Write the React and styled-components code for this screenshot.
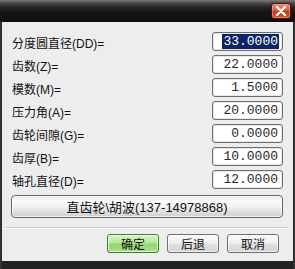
import React from 'react';
import styled, { createGlobalStyle } from 'styled-components';

const GlobalStyle = createGlobalStyle`
    html, body {
        margin: 0;
        padding: 0;
        background: #1b1b1b;
    }
    * {
        box-sizing: border-box;
    }
`;

const Window = styled.div`
    width: 295px;
    height: 269px;
    display: flex;
    flex-direction: column;
    background: #1c1c1c;
    font-family: "Liberation Sans", "Noto Sans CJK SC", sans-serif;
`;

const TitleBar = styled.div`
    height: 22px;
    flex: none;
    display: flex;
    justify-content: flex-end;
    align-items: flex-start;
    padding: 3px 4px 0 0;
    background: linear-gradient(to bottom, #7a7a7a 0px, #4a4a4a 3px, #262626 7px, #151515 12px, #0e0e0e 22px);
`;

const CloseButton = styled.div`
    width: 20px;
    height: 16px;
    border-radius: 3px;
    border: 1px solid #4a1208;
    background: linear-gradient(to bottom, #eb8c72 0%, #d85a3c 45%, #c0381c 55%, #d0563a 100%);
    display: flex;
    align-items: center;
    justify-content: center;
    box-shadow: inset 0 0 0 1px rgba(255, 190, 170, 0.45);
`;

const Frame = styled.div`
    flex: 1;
    display: flex;
    padding: 0 2px 8px 2px;
    background: linear-gradient(to right, #3c3c3c, #222 2px, #222 calc(100% - 2px), #3c3c3c);
`;

const Body = styled.div`
    flex: 1;
    background: #ededed;
    padding: 10px 10px 0 9px;
    display: flex;
    flex-direction: column;
`;

const Rows = styled.div`
    display: flex;
    flex-direction: column;
    gap: 4px;
`;

const Row = styled.div`
    height: 19px;
    display: flex;
    align-items: center;
    justify-content: space-between;
`;

const Label = styled.span`
    font-size: 12px;
    color: #111;
    padding-left: 1px;
    padding-top: 2px;
`;

const Field = styled.div`
    width: 71px;
    height: 19px;
    border: 1px solid #6e6e6e;
    border-radius: 3px;
    background: #fff;
    box-shadow: inset 0 0 0 1px #e6e6e6;
    display: flex;
    align-items: center;
    justify-content: flex-end;
    padding: 0 3px;
    font-family: "Liberation Mono", "DejaVu Sans Mono", monospace;
    font-size: 13px;
    color: #2a2a2a;
`;

const Value = styled.span`
    line-height: 15px;
    padding: 0 1px;
    background: ${p => (p.$selected ? '#0c2468' : 'transparent')};
    color: ${p => (p.$selected ? '#ffffff' : '#2a2a2a')};
`;

const WideButton = styled.div`
    margin-top: 6px;
    height: 23px;
    border: 1px solid #666;
    border-radius: 4px;
    background: linear-gradient(to bottom, #e9e9e9 0%, #fbfbfb 25%, #f2f2f2 50%, #dcdcdc 80%, #cfcfcf 100%);
    box-shadow: inset 0 0 0 1px rgba(255, 255, 255, 0.7);
    display: flex;
    align-items: center;
    justify-content: center;
    font-size: 13px;
    color: #111;
`;

const Separator = styled.div`
    margin: 9px -5px 0 -5px;
    height: 2px;
    border-top: 1px solid #c9c9c9;
    border-bottom: 1px solid #fbfbfb;
`;

const ButtonRow = styled.div`
    margin-top: 5px;
    display: flex;
    justify-content: flex-end;
    gap: 8px;
    padding-right: 4px;
`;

const Button = styled.div`
    width: 52px;
    height: 19px;
    border-radius: 3px;
    border: 1px solid ${p => (p.$primary ? '#3f7f2c' : '#707070')};
    background: ${p =>
        p.$primary
            ? 'linear-gradient(to bottom, #d9f4c8 0%, #b6e79a 45%, #92d76c 55%, #a9e28a 100%)'
            : 'linear-gradient(to bottom, #fafafa 0%, #f0f0f0 45%, #e0e0e0 55%, #d4d4d4 100%)'};
    box-shadow: inset 0 0 0 1px rgba(255, 255, 255, 0.6);
    display: flex;
    align-items: center;
    justify-content: center;
    font-size: 12px;
    color: #111;
`;

const params = [
    { label: '分度圆直径(DD)=', value: '33.0000', selected: true },
    { label: '齿数(Z)=', value: '22.0000' },
    { label: '模数(M)=', value: '1.5000' },
    { label: '压力角(A)=', value: '20.0000' },
    { label: '齿轮间隙(G)=', value: '0.0000' },
    { label: '齿厚(B)=', value: '10.0000' },
    { label: '轴孔直径(D)=', value: '12.0000' },
];

const App = () => {
    return (
        <Window>
            <GlobalStyle />
            <TitleBar>
                <CloseButton>
                    <svg width="12" height="10" viewBox="0 0 12 10">
                        <path d="M2 1 L10 9 M10 1 L2 9" stroke="#fff" strokeWidth="2.4" strokeLinecap="round" />
                    </svg>
                </CloseButton>
            </TitleBar>
            <Frame>
                <Body>
                    <Rows>
                        {params.map(p => (
                            <Row key={p.label}>
                                <Label>{p.label}</Label>
                                <Field>
                                    <Value $selected={p.selected}>{p.value}</Value>
                                </Field>
                            </Row>
                        ))}
                    </Rows>
                    <WideButton>直齿轮\胡波(137-14978868)</WideButton>
                    <Separator />
                    <ButtonRow>
                        <Button $primary>确定</Button>
                        <Button>后退</Button>
                        <Button>取消</Button>
                    </ButtonRow>
                </Body>
            </Frame>
        </Window>
    );
};

export default App;
